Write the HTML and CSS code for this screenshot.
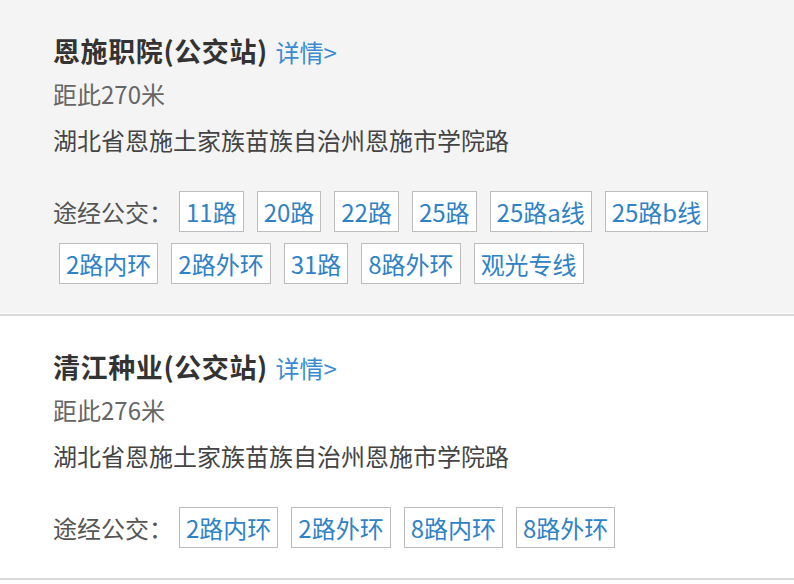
FILE: index.html
```html
<!DOCTYPE html>
<html lang="zh-CN">
<head>
    <meta charset="UTF-8">
    <meta name="viewport" content="width=device-width, initial-scale=1.0">
    <title>公交站</title>
    <link rel="stylesheet" href="styles.css">
</head>
<body>

    <!-- Station 1 -->
    <div class="station station-gray">
        <div class="station-title">恩施职院(公交站) <a href="#" class="detail">详情&gt;</a></div>
        <div class="distance">距此270米</div>
        <div class="address">湖北省恩施土家族苗族自治州恩施市学院路</div>
        <div class="routes">
            <span class="routes-label">途经公交：</span>
            <a href="#" class="route">11路</a>
            <a href="#" class="route">20路</a>
            <a href="#" class="route">22路</a>
            <a href="#" class="route">25路</a>
            <a href="#" class="route">25路a线</a>
            <a href="#" class="route">25路b线</a>
            <a href="#" class="route">2路内环</a>
            <a href="#" class="route">2路外环</a>
            <a href="#" class="route">31路</a>
            <a href="#" class="route">8路外环</a>
            <a href="#" class="route">观光专线</a>
        </div>
    </div>

    <!-- Station 2 -->
    <div class="station">
        <div class="station-title">清江种业(公交站) <a href="#" class="detail">详情&gt;</a></div>
        <div class="distance">距此276米</div>
        <div class="address">湖北省恩施土家族苗族自治州恩施市学院路</div>
        <div class="routes">
            <span class="routes-label">途经公交：</span>
            <a href="#" class="route">2路内环</a>
            <a href="#" class="route">2路外环</a>
            <a href="#" class="route">8路内环</a>
            <a href="#" class="route">8路外环</a>
        </div>
    </div>

</body>
</html>
```

FILE: styles.css
```css
body {
    font-family: "Noto Sans CJK SC", "Noto Sans", sans-serif;
    margin: 0;
    padding: 0;
    background-color: #fff;
    color: #333;
}
.station {
    padding: 33px 53px 30px 53px;
    border-bottom: 2px solid #d9d9d9;
    background-color: #fff;
}
.station-gray {
    background-color: #f4f4f5;
    box-shadow: inset 0 -1px 0 #fff;
}
.station-title {
    font-size: 27px;
    line-height: 36px;
    font-weight: bold;
    letter-spacing: 0.6px;
    color: #333;
}
.detail {
    font-size: 24px;
    font-weight: normal;
    letter-spacing: 0;
    color: #3a8bd0;
    text-decoration: none;
    margin-left: 1px;
}
.distance {
    margin-top: 6px;
    font-size: 24px;
    line-height: 36px;
    color: #666;
}
.address {
    margin-top: 10px;
    font-size: 24px;
    line-height: 36px;
    color: #444;
}
.routes {
    display: flex;
    flex-wrap: wrap;
    align-items: center;
    row-gap: 11px;
    margin-top: 33px;
}
.routes-label {
    font-size: 24px;
    color: #555;
}
.route {
    display: block;
    height: 41px;
    box-sizing: border-box;
    padding: 0 6px;
    margin: 0 7px 0 6px;
    border: 1px solid #bdbdbd;
    background-color: #fff;
    color: #2f82c6;
    font-size: 24px;
    line-height: 39px;
    text-decoration: none;
}
```
